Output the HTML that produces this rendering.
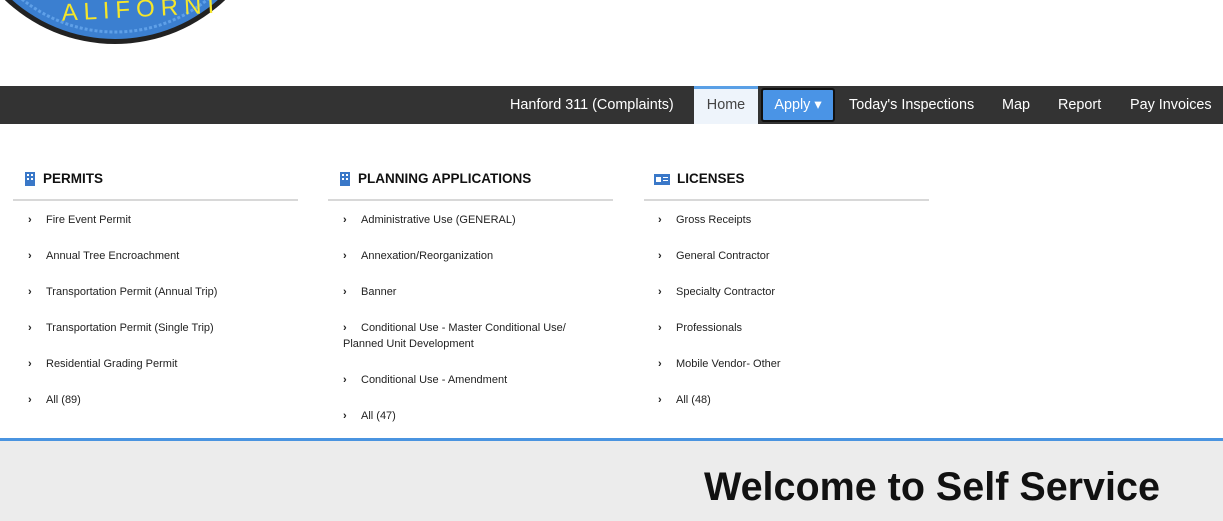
<!DOCTYPE html>
<html><head><style>
*{margin:0;padding:0;box-sizing:border-box}
body{width:1223px;height:521px;overflow:hidden;background:#fff;font-family:"Liberation Sans",sans-serif;position:relative}
.nav{position:absolute;top:86px;left:0;width:1223px;height:38px;background:#333}
.nav span{position:absolute;top:0;height:38px;line-height:38px;color:#fff;font-size:14.4px}
.home{background:#eef4fb;color:#444!important;border-top:3px solid #5aa0e6;line-height:33px!important;text-align:center}
.apply{background:#4a94e6;border:2px solid #111;border-radius:3px;top:2px!important;height:34px!important;line-height:30px!important;text-align:center}
.col{position:absolute;top:171px;width:285px}
.col h3{font-size:13.5px;font-weight:bold;color:#111;padding-left:30px;height:22px;position:relative}
.col h3 i{position:absolute;left:11px;top:1px}
.col hr{border:0;height:2px;background:#d8d8d8;margin-top:6px}
.it{position:absolute;font-size:11px;color:#222;left:15px;line-height:16px}
.it b{display:inline-block;width:18px;font-size:11px}
.foot{position:absolute;top:438px;left:0;width:1223px;height:83px;background:#ececec;border-top:3px solid #4a94e0}
.foot div{position:absolute;left:704px;top:24px;font-size:39.5px;font-weight:bold;color:#111}
</style></head><body>
<svg style="position:absolute;left:0;top:0" width="240" height="50">
<circle cx="115" cy="-116" r="160" fill="#222"/>
<circle cx="115" cy="-116" r="155" fill="#3b7fd0"/>
<circle cx="115" cy="-116" r="148" fill="none" stroke="#5fa0e8" stroke-width="3" stroke-dasharray="3 2"/>
<text x="62" y="18" fill="#f5e62a" font-size="24" font-family="Liberation Sans" letter-spacing="6" transform="rotate(-3 115 20)">ALIFORNI</text>
</svg>
<div class="nav">
<span style="left:510px">Hanford 311 (Complaints)</span>
<span class="home" style="left:694px;width:64px">Home</span>
<span class="apply" style="left:761px;width:74px">Apply ▾</span>
<span style="left:849px">Today's Inspections</span>
<span style="left:1002px">Map</span>
<span style="left:1058px">Report</span>
<span style="left:1130px">Pay Invoices</span>
</div>
<div class="col" style="left:13px"><h3><i><svg width="12" height="14"><rect x="1" y="0" width="10" height="14" fill="#3a78c8"/><rect x="3" y="2" width="2" height="2" fill="#fff"/><rect x="7" y="2" width="2" height="2" fill="#fff"/><rect x="3" y="6" width="2" height="2" fill="#fff"/><rect x="7" y="6" width="2" height="2" fill="#fff"/></svg></i>PERMITS</h3><hr></div>
<div class="col" style="left:328px"><h3><i><svg width="12" height="14"><rect x="1" y="0" width="10" height="14" fill="#3a78c8"/><rect x="3" y="2" width="2" height="2" fill="#fff"/><rect x="7" y="2" width="2" height="2" fill="#fff"/><rect x="3" y="6" width="2" height="2" fill="#fff"/><rect x="7" y="6" width="2" height="2" fill="#fff"/></svg></i>PLANNING APPLICATIONS</h3><hr></div>
<div class="col" style="left:644px"><h3 style="padding-left:33px"><i style="left:10px;top:2px"><svg width="16" height="12"><rect x="0" y="1" width="16" height="11" fill="#3a78c8"/><rect x="2" y="4" width="5" height="5" fill="#fff"/><rect x="9" y="4" width="5" height="1" fill="#fff"/><rect x="9" y="7" width="5" height="1" fill="#fff"/></svg></i>LICENSES</h3><hr></div>
<div class="it" style="left:28px;top:212px"><b>›</b>Fire Event Permit</div>
<div class="it" style="left:28px;top:248px"><b>›</b>Annual Tree Encroachment</div>
<div class="it" style="left:28px;top:284px"><b>›</b>Transportation Permit (Annual Trip)</div>
<div class="it" style="left:28px;top:320px"><b>›</b>Transportation Permit (Single Trip)</div>
<div class="it" style="left:28px;top:356px"><b>›</b>Residential Grading Permit</div>
<div class="it" style="left:28px;top:392px"><b>›</b>All (89)</div>
<div class="it" style="left:343px;top:212px"><b>›</b>Administrative Use (GENERAL)</div>
<div class="it" style="left:343px;top:248px"><b>›</b>Annexation/Reorganization</div>
<div class="it" style="left:343px;top:284px"><b>›</b>Banner</div>
<div class="it" style="left:343px;top:320px"><b>›</b>Conditional Use - Master Conditional Use/<br>Planned Unit Development</div>
<div class="it" style="left:343px;top:372px"><b>›</b>Conditional Use - Amendment</div>
<div class="it" style="left:343px;top:408px"><b>›</b>All (47)</div>
<div class="it" style="left:658px;top:212px"><b>›</b>Gross Receipts</div>
<div class="it" style="left:658px;top:248px"><b>›</b>General Contractor</div>
<div class="it" style="left:658px;top:284px"><b>›</b>Specialty Contractor</div>
<div class="it" style="left:658px;top:320px"><b>›</b>Professionals</div>
<div class="it" style="left:658px;top:356px"><b>›</b>Mobile Vendor- Other</div>
<div class="it" style="left:658px;top:392px"><b>›</b>All (48)</div>
<div class="foot"><div>Welcome to Self Service</div></div>
</body></html>
